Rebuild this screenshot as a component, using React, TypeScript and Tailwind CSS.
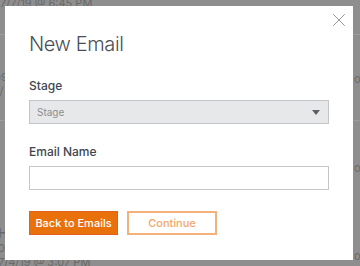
import { X } from "lucide-react"

function Field({ label, children }: { label: string; children: React.ReactNode }) {
  return (
    <div className="flex flex-col gap-[7px]">
      <label className="text-[12px] leading-[14px] font-medium text-[#3f4650]">{label}</label>
      {children}
    </div>
  )
}

export default function App() {
  return (
    <div className="relative w-[360px] h-[266px] overflow-hidden bg-[#8e8e8e] font-['Inter',sans-serif] text-[#6a6a6a]">
      {/* page behind the overlay */}
      <div className="absolute left-0 top-[-4px] text-[11px] leading-[14px]">7/7/19 @ 6:45 PM</div>
      <div className="absolute left-0 top-[34px] w-full border-t border-[#9c9c9c]" />
      <div className="absolute left-[-6px] top-[70px] text-[11px] leading-[14px]">
        <div>09</div>
        <div>y/</div>
      </div>
      <div className="absolute left-0 top-[120px] w-full border-t border-[#9c9c9c]" />
      <div className="absolute left-[354px] top-[71px] flex flex-col gap-[72px] text-[11px]">
        <span>or</span>
        <span>or</span>
        <span>or</span>
      </div>
      <div className="absolute left-[-2px] top-[225px] text-[11px] leading-[14px]">
        <div className="font-semibold text-[13px] leading-[16px]">H</div>
        <div>06</div>
        <div>7/4/19 @ 3:07 PM</div>
      </div>

      {/* modal */}
      <div className="absolute left-[5px] top-[6px] w-[348px] h-[254px] bg-white px-6 pt-[26px] flex flex-col">
        <button className="absolute right-[3px] top-[3px] text-[#8b8e93]">
          <X className="w-[22px] h-[22px]" strokeWidth={1} />
        </button>
        <h2 className="text-[20px] leading-[24px] font-light tracking-[-0.4px] text-[#4a4f57]">New Email</h2>

        <div className="mt-[23px] flex flex-col gap-[21px]">
          <Field label="Stage">
            <div className="flex items-center justify-between h-[24px] w-[300px] bg-[#e7e8ea] border border-[#c3c5c8] pl-[7px] pr-[8px]">
              <span className="text-[10px] text-[#8a8d92]">Stage</span>
              <svg width="8" height="5" viewBox="0 0 8 5">
                <path d="M0 0h8L4 5z" fill="#5b5f66" />
              </svg>
            </div>
          </Field>
          <Field label="Email Name">
            <input className="h-[24px] w-[300px] border border-[#c4c6c9] outline-none" />
          </Field>
        </div>

        <div className="mt-[21px] flex gap-[9px]">
          <button className="h-[24px] w-[89px] bg-[#e9710c] border border-[#e1621a] text-white text-[11px] font-medium">
            Back to Emails
          </button>
          <button className="h-[24px] w-[90px] border-2 border-[#f3b27c] text-[#f2a767] text-[11px] font-medium">
            Continue
          </button>
        </div>
      </div>
    </div>
  )
}
